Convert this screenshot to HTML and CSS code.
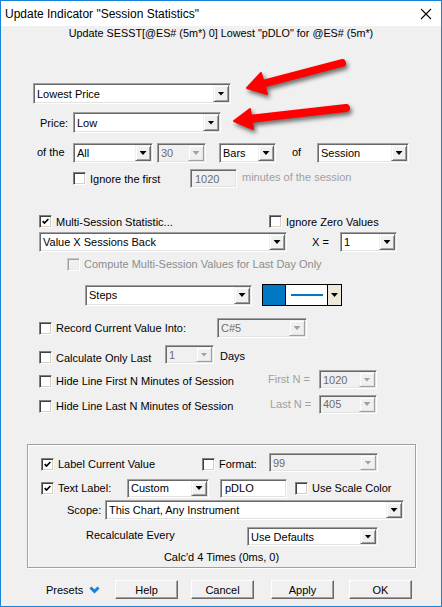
FILE: index.html
```html
<!DOCTYPE html>
<html lang="en">
<head>
  <meta charset="UTF-8">
  <title>Update Indicator "Session Statistics"</title>
  <link rel="stylesheet" href="styles.css">
</head>
<body>
  <div class="window">
    <div class="titlebar">
      <span class="title">Update Indicator "Session Statistics"</span>
      <svg class="close" width="12" height="12" viewBox="0 0 12 12"><path d="M1 1L11 11M11 1L1 11" stroke="#000" stroke-width="1.1" fill="none"/></svg>
    </div>

    <div class="subtitle">Update SESST[@ES# (5m*) 0] Lowest "pDLO" for @ES# (5m*)</div>

    <div class="row r-type">
      <div class="combo w-type"><span class="val">Lowest Price</span><span class="drop"></span></div>
    </div>

    <div class="row r-price">
      <span class="lbl l-price">Price:</span>
      <div class="combo w-price"><span class="val">Low</span><span class="drop"></span></div>
    </div>

    <div class="row r-of">
      <span class="lbl l-ofthe">of the</span>
      <div class="combo w-all"><span class="val">All</span><span class="drop"></span></div>
      <div class="combo w-30 off"><span class="val">30</span><span class="drop"></span></div>
      <div class="combo w-bars"><span class="val">Bars</span><span class="drop"></span></div>
      <span class="lbl l-of">of</span>
      <div class="combo w-session"><span class="val">Session</span><span class="drop"></span></div>
    </div>

    <div class="row r-ignore">
      <label class="check c-ignore"><span class="box"></span>Ignore the first</label>
      <div class="field w-1020 off">1020</div>
      <span class="lbl gray l-minutes">minutes of the session</span>
    </div>

    <div class="row r-multi">
      <label class="check c-multi"><span class="box on"><svg viewBox="0 0 11 11"><path d="M2 5l2.3 2.5L9 2.5"/></svg></span>Multi-Session Statistic...</label>
      <label class="check"><span class="box"></span>Ignore Zero Values</label>
    </div>

    <div class="row r-valx">
      <div class="combo w-valx"><span class="val">Value X Sessions Back</span><span class="drop"></span></div>
      <span class="lbl l-x">X =</span>
      <div class="combo w-x"><span class="val">1</span><span class="drop"></span></div>
    </div>

    <div class="row r-compute">
      <label class="check off"><span class="box"></span>Compute Multi-Session Values for Last Day Only</label>
    </div>

    <div class="row r-steps">
      <div class="combo w-steps"><span class="val">Steps</span><span class="drop"></span></div>
      <div class="style-pick">
        <span class="swatch"></span>
        <span class="line"></span>
        <span class="sdrop"></span>
      </div>
    </div>

    <div class="row r-record">
      <label class="check c-record"><span class="box"></span>Record Current Value Into:</label>
      <div class="combo w-c5 off"><span class="val">C#5</span><span class="drop"></span></div>
    </div>

    <div class="row r-calc">
      <label class="check c-calc"><span class="box"></span>Calculate Only Last</label>
      <div class="combo w-days off up6"><span class="val">1</span><span class="drop"></span></div>
      <span class="lbl l-days">Days</span>
    </div>

    <div class="row r-hfirst">
      <label class="check c-hfirst"><span class="box"></span>Hide Line First N Minutes of Session</label>
      <span class="lbl gray l-first">First N =</span>
      <div class="combo w-n off up3"><span class="val">1020</span><span class="drop"></span></div>
    </div>

    <div class="row r-hlast">
      <label class="check c-hlast"><span class="box"></span>Hide Line Last N Minutes of Session</label>
      <span class="lbl gray l-last">Last N =</span>
      <div class="combo w-n off up4"><span class="val">405</span><span class="drop"></span></div>
    </div>

    <div class="group">
      <div class="row g-label">
        <label class="check c-label"><span class="box on"><svg viewBox="0 0 11 11"><path d="M2 5l2.3 2.5L9 2.5"/></svg></span>Label Current Value</label>
        <label class="check c-format"><span class="box"></span>Format:</label>
        <div class="combo w-fmt off up3"><span class="val">99</span><span class="drop"></span></div>
      </div>
      <div class="row g-text">
        <label class="check c-text"><span class="box on"><svg viewBox="0 0 11 11"><path d="M2 5l2.3 2.5L9 2.5"/></svg></span>Text Label:</label>
        <div class="combo w-custom"><span class="val">Custom</span><span class="drop"></span></div>
        <div class="field w-pdlo">pDLO</div>
        <label class="check c-scale"><span class="box"></span>Use Scale Color</label>
      </div>
      <div class="row g-scope">
        <span class="lbl l-scope">Scope:</span>
        <div class="combo w-scope"><span class="val">This Chart, Any Instrument</span><span class="drop"></span></div>
      </div>
      <div class="row g-recalc">
        <span class="lbl l-recalc">Recalculate Every</span>
        <div class="combo w-recalc"><span class="val">Use Defaults</span><span class="drop"></span></div>
      </div>
      <div class="calcd">Calc'd 4 Times (0ms, 0)</div>
    </div>

    <div class="row buttons">
      <span class="presets">Presets
        <svg width="11" height="8" viewBox="0 0 11 8"><path d="M1.5 1.5L5.5 5.5L9.5 1.5" stroke="#1a7fd6" stroke-width="3" fill="none"/></svg>
      </span>
      <button class="btn">Help</button>
      <button class="btn b-cancel">Cancel</button>
      <button class="btn b-apply">Apply</button>
      <button class="btn b-ok">OK</button>
    </div>

    <svg class="arrows" width="442" height="607" viewBox="0 0 442 607">
      <g fill="#ff0000" stroke="#ff0000" stroke-linejoin="round">
        <line x1="342" y1="63" x2="262" y2="84" stroke-width="8" stroke-linecap="round"/>
        <polygon points="247,88 261,73 267,94" stroke-width="2"/>
        <line x1="346" y1="108" x2="249" y2="119" stroke-width="8" stroke-linecap="round"/>
        <polygon points="234,121 250,109 253,129" stroke-width="2"/>
      </g>
    </svg>
  </div>
</body>
</html>
```

FILE: styles.css
```css
body {
  margin: 0;
  background: #fff;
}
.window {
  position: relative;
  width: 442px;
  height: 607px;
  box-sizing: border-box;
  border: 1px solid #1883d7;
  background: #f0f0f0;
  font-family: "Liberation Sans", Arial, sans-serif;
  font-size: 11px;
  color: #000;
}
.titlebar {
  height: 25px;
  background: #fff;
  display: flex;
  align-items: center;
  justify-content: space-between;
  padding: 0 9px 0 4px;
}
.title {
  font-size: 12px;
}
.subtitle {
  text-align: center;
  font-size: 10.8px;
  line-height: 14px;
}
.row {
  display: flex;
  align-items: center;
}
.lbl {
  white-space: nowrap;
}
.gray {
  color: #a0a0a0;
}

/* combo boxes and edits */
.combo,
.field {
  display: flex;
  box-sizing: border-box;
  height: 20px;
  padding: 1px;
  background: #fff;
  border: 1px solid;
  border-color: #a0a0a0 #fff #fff #a0a0a0;
  box-shadow: inset 1px 1px #696969, inset -1px -1px #e3e3e3;
}
.combo .val {
  flex: 1;
  display: flex;
  align-items: center;
  padding-left: 2px;
  white-space: nowrap;
  overflow: hidden;
}
.field {
  align-items: center;
  padding-left: 4px;
}
.drop {
  width: 16px;
  box-sizing: border-box;
  background: #f0f0f0;
  border: 1px solid;
  border-color: #f0f0f0 #696969 #696969 #f0f0f0;
  box-shadow: inset 1px 1px #fff, inset -1px -1px #a0a0a0;
  display: flex;
  align-items: center;
  justify-content: center;
}
.drop::after,
.sdrop::after {
  content: "";
  width: 7px;
  height: 4px;
  background: #000;
  clip-path: polygon(0 0, 100% 0, 50% 100%);
}
.off {
  background: #f0f0f0;
  color: #6d6d6d;
}
.off .drop {
  border-color: #f0f0f0 #a0a0a0 #a0a0a0 #f0f0f0;
  box-shadow: inset 1px 1px #fff, inset -1px -1px #e3e3e3;
}
.off .drop::after {
  background: #a0a0a0;
}
.up6 { margin-bottom: 6px; }
.up4 { margin-bottom: 4px; }
.up3 { margin-bottom: 3px; }

/* check boxes */
.check {
  display: flex;
  align-items: center;
  white-space: nowrap;
}
.box {
  width: 13px;
  height: 13px;
  box-sizing: border-box;
  margin-right: 4px;
  background: #fff;
  border: 1px solid;
  border-color: #808080 #fff #fff #808080;
  box-shadow: inset 1px 1px #404040, inset -1px -1px #d4d0c8;
  display: flex;
  align-items: center;
  justify-content: center;
}
.box svg {
  width: 9px;
  height: 9px;
}
.box path {
  fill: none;
  stroke: #000;
  stroke-width: 2;
}
.check.off {
  color: #8d8d8d;
}
.check.off .box {
  background: #f0f0f0;
  border-color: #c8c8c8 #fff #fff #c8c8c8;
  box-shadow: inset 1px 1px #a0a0a0, inset -1px -1px #e8e8e8;
}

/* top section rows */
.r-type { margin-top: 43px; height: 21px; padding-left: 32px; }
.r-type .combo { height: 21px; }
.w-type { width: 198px; }

.r-price { margin-top: 8px; height: 21px; padding-left: 39px; }
.r-price .combo { height: 21px; }
.l-price { width: 33px; }
.w-price { width: 148px; }

.r-of { margin-top: 10px; height: 20px; padding-left: 36px; }
.l-ofthe { width: 36px; margin-top: -3px; }
.w-all { width: 80px; }
.w-30 { width: 49px; margin-left: 4px; }
.w-bars { width: 57px; margin-left: 13px; }
.l-of { width: 25px; margin-left: 16px; margin-top: -3px; }
.w-session { width: 92px; }

.r-ignore { margin-top: 6px; height: 19px; padding-left: 72px; }
.c-ignore { width: 117px; }
.w-1020 { width: 47px; height: 19px; }
.l-minutes { margin-left: 5px; margin-top: -3px; }

.r-multi { margin-top: 25px; height: 17px; padding-left: 38px; }
.c-multi { width: 230px; }

.r-valx { margin-top: 2px; height: 20px; padding-left: 38px; }
.w-valx { width: 248px; }
.l-x { width: 28px; margin-left: 25px; }
.w-x { width: 57px; }

.r-compute { margin-top: 4px; height: 16px; padding-left: 66px; }

.r-steps { margin-top: 12px; height: 22px; padding-left: 84px; }
.w-steps { width: 167px; height: 21px; }
.style-pick {
  display: flex;
  width: 80px;
  height: 22px;
  margin-left: 10px;
  box-sizing: border-box;
  border: 1px solid #000;
}
.swatch {
  width: 22px;
  background: #0078c4;
  border-right: 1px solid #000;
}
.line {
  flex: 1;
  background: #fff;
  display: flex;
  align-items: center;
  justify-content: center;
}
.line::before {
  content: "";
  width: 32px;
  height: 2px;
  background: #0078c4;
}
.sdrop {
  width: 13px;
  background: #ece9d8;
  border-left: 1px solid #000;
  display: flex;
  align-items: center;
  justify-content: center;
}

.r-record { margin-top: 12px; height: 20px; padding-left: 38px; }
.c-record { width: 178px; }
.w-c5 { width: 90px; }

.r-calc { margin-top: 7px; height: 25px; padding-left: 38px; }
.c-calc { width: 126px; }
.w-days { width: 49px; height: 19px; }
.l-days { margin-left: 6px; margin-top: -4px; }

.r-hfirst { margin-top: 0; height: 22px; padding-left: 38px; }
.c-hfirst { width: 229px; }
.l-first { width: 51px; margin-top: -4px; }
.w-n { width: 58px; height: 19px; }

.r-hlast { margin-top: 2px; height: 24px; padding-left: 38px; }
.c-hlast { width: 231px; }
.l-last { width: 49px; margin-top: -4px; }

/* group box */
.group {
  margin: 26px 0 0 26px;
  width: 389px;
  height: 124px;
  box-sizing: border-box;
  border: 1px solid #a0a0a0;
  box-shadow: inset 1px 1px #fff, 1px 1px #fff;
  padding-top: 8px;
}
.g-label { height: 22px; padding-left: 13px; }
.c-label { width: 161px; }
.c-format { width: 67px; }
.w-fmt { width: 109px; height: 19px; }

.g-text { margin-top: 3px; height: 20px; padding-left: 13px; }
.c-text { width: 86px; }
.w-custom { width: 82px; height: 19px; }
.w-pdlo { width: 67px; height: 19px; margin-left: 11px; }
.c-scale { margin-left: 8px; }

.g-scope { margin-top: 2px; height: 20px; padding-left: 39px; }
.l-scope { width: 38px; margin-top: -1px; }
.w-scope { width: 299px; }

.g-recalc { margin-top: 7px; height: 19px; padding-left: 58px; }
.l-recalc { width: 161px; margin-top: -3px; }
.w-recalc { width: 131px; height: 19px; }

.calcd {
  margin-top: 4px;
  line-height: 14px;
  text-align: center;
}

/* bottom buttons */
.buttons { margin-top: 12px; height: 19px; padding-left: 45px; }
.presets {
  width: 69px;
  display: flex;
  align-items: center;
  gap: 6px;
}
.btn {
  width: 63px;
  height: 19px;
  padding: 0;
  font: inherit;
  color: #000;
  background: #f0f0f0;
  border: 1px solid;
  border-color: #fff #696969 #696969 #fff;
  box-shadow: inset -1px -1px #a0a0a0;
}
.b-cancel { margin-left: 13px; }
.b-apply { margin-left: 17px; }
.b-ok { margin-left: 15px; }

/* red callout arrows drawn over the dialog */
.arrows {
  position: absolute;
  left: -1px;
  top: -1px;
  pointer-events: none;
  filter: drop-shadow(2px 3px 2px rgba(0, 0, 0, 0.55));
}
```
